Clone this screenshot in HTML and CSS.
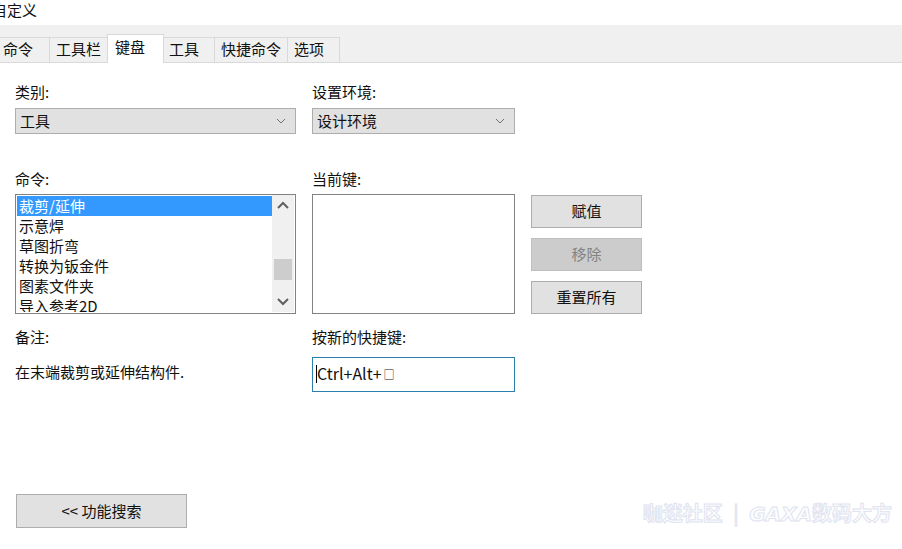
FILE: index.html
```html
<!DOCTYPE html>
<html>
<head>
    <meta charset="utf-8">
    <link rel="stylesheet" href="styles.css">
</head>
<body>
    <div id="dialog" class="flex-col">
        <div id="title">自定义</div>

        <div id="tabs" class="flex">
            <div class="tab">命令</div>
            <div class="tab">工具栏</div>
            <div class="tab active">键盘</div>
            <div class="tab">工具</div>
            <div class="tab">快捷命令</div>
            <div class="tab">选项</div>
        </div>

        <div id="page" class="flex-col flex-grow">
            <!-- category / environment -->
            <div class="row top-row">
                <div class="field col-left">
                    <div class="label">类别:</div>
                    <div class="combo flex">
                        <span class="flex-grow">工具</span>
                        <svg class="chev" width="10" height="6" viewBox="0 0 10 6"><polyline points="1,1 5,5 9,1" fill="none" stroke="#707070" stroke-width="1"/></svg>
                    </div>
                </div>
                <div class="field col-mid">
                    <div class="label">设置环境:</div>
                    <div class="combo flex">
                        <span class="flex-grow">设计环境</span>
                        <svg class="chev" width="10" height="6" viewBox="0 0 10 6"><polyline points="1,1 5,5 9,1" fill="none" stroke="#707070" stroke-width="1"/></svg>
                    </div>
                </div>
            </div>

            <!-- commands / current keys -->
            <div class="row cmd-row">
                <div class="field col-left">
                    <div class="label">命令:</div>
                    <div class="listbox flex">
                        <div class="items flex-grow">
                            <div class="item selected">裁剪/延伸</div>
                            <div class="item">示意焊</div>
                            <div class="item">草图折弯</div>
                            <div class="item">转换为钣金件</div>
                            <div class="item">图素文件夹</div>
                            <div class="item">导入参考2D</div>
                        </div>
                        <div class="scrollbar flex-col">
                            <svg class="arrow" width="22" height="20" viewBox="0 0 22 20"><polyline points="6,13 11,8 16,13" fill="none" stroke="#606060" stroke-width="2"/></svg>
                            <div class="track flex-grow">
                                <div class="thumb"></div>
                            </div>
                            <svg class="arrow" width="22" height="20" viewBox="0 0 22 20"><polyline points="6,7 11,12 16,7" fill="none" stroke="#606060" stroke-width="2"/></svg>
                        </div>
                    </div>
                </div>
                <div class="field col-mid">
                    <div class="label">当前键:</div>
                    <div class="keybox"></div>
                </div>
                <div class="buttons flex-col">
                    <div class="btn">赋值</div>
                    <div class="btn disabled">移除</div>
                    <div class="btn">重置所有</div>
                </div>
            </div>

            <!-- notes / new shortcut -->
            <div class="row note-row">
                <div class="field col-left">
                    <div class="label">备注:</div>
                    <div class="note">在末端裁剪或延伸结构件.</div>
                </div>
                <div class="field col-mid">
                    <div class="label">按新的快捷键:</div>
                    <div class="hotkey flex">
                        <span class="caret"></span><span class="keys">Ctrl+Alt+</span><span class="tofu">□</span>
                    </div>
                </div>
            </div>

            <div class="bottom">
                <div class="btn search-btn">&lt;&lt; 功能搜索</div>
            </div>
        </div>

        <div id="watermark">咖迷社区 <span class="bar">|</span> <i>GAXA</i>数码大方</div>
    </div>
</body>
</html>
```

FILE: styles.css
```css
/* Helpers */
.flex { display: flex; }
.flex-col { display: flex; flex-direction: column; }
.flex-grow { flex-grow: 1; }

/* General */
body, html {
    margin: 0;
    padding: 0;
    height: 100%;
    overflow: hidden;
    background: #fff;
}
body {
    font-family: "Noto Sans CJK SC", "Noto Sans", sans-serif;
    font-size: 15px;
    color: #111;
}
#dialog {
    position: relative;
    height: 549px;
}
#title {
    height: 25px;
    line-height: 19px;
    margin-left: -8px;
}

/* Tabs */
#tabs {
    height: 37px;
    background: #f0f0f0;
    border-bottom: 1px solid #d9d9d9;
    align-items: flex-end;
    margin-left: -3px;
}
.tab {
    box-sizing: border-box;
    height: 25px;
    min-width: 53px;
    padding: 0 6px;
    line-height: 21px;
    border: 1px solid #d9d9d9;
    border-bottom: none;
    margin-left: -1px;
    background: #f0f0f0;
}
.tab:first-child { padding-left: 6px; min-width: 54px; }
.tab.active {
    height: 29px;
    margin-bottom: -1px;
    background: #fff;
    padding-left: 7px;
    line-height: 23px;
    position: relative;
    min-width: 57px;
    margin-right: -1px;
}

/* Page */
#page {
    padding-left: 15px;
}
.row {
    display: flex;
    gap: 16px;
}
.col-left { width: 281px; }
.col-mid { width: 203px; }
.label {
    height: 20px;
    line-height: 17px;
}
.top-row { margin-top: 20px; }
.cmd-row { margin-top: 36px; }
.note-row { margin-top: 14px; }

.combo {
    box-sizing: border-box;
    margin-top: 5px;
    height: 26px;
    background: #e1e1e1;
    border: 1px solid #adadad;
    padding: 0 9px 0 4px;
    align-items: center;
    line-height: 22px;
}

.listbox {
    box-sizing: border-box;
    margin-top: 4px;
    height: 120px;
    border: 1px solid #828282;
    padding: 1px 1px 1px 1px;
    overflow: hidden;
}
.items { overflow: hidden; }
.item {
    height: 20px;
    line-height: 20px;
    padding-left: 2px;
    white-space: nowrap;
}
.item.selected {
    background: #3399ff;
    color: #fff;
}
.scrollbar {
    width: 22px;
    margin-top: -1px;
    background: #f0f0f0;
}
.arrow { display: block; flex-shrink: 0; }
.track { position: relative; }
.thumb {
    position: absolute;
    left: 2px; right: 2px;
    top: 44px;
    height: 21px;
    background: #cdcdcd;
}

.keybox {
    box-sizing: border-box;
    margin-top: 4px;
    height: 120px;
    border: 1px solid #828282;
}

.buttons {
    width: 111px;
    padding-top: 25px;
    gap: 10px;
}
.btn {
    box-sizing: border-box;
    height: 33px;
    line-height: 29px;
    text-align: center;
    background: #e1e1e1;
    border: 1px solid #adadad;
}
.btn.disabled {
    background: #cccccc;
    border-color: #bfbfbf;
    color: #838383;
}

.note {
    margin-top: 15px;
    height: 20px;
    line-height: 18px;
}
.hotkey {
    box-sizing: border-box;
    margin-top: 9px;
    height: 35px;
    border: 1px solid #2a7fae;
    padding: 0 3px;
    align-items: center;
}
.caret {
    width: 1px;
    height: 18px;
    background: #000;
    margin-top: -2px;
}
.keys {
    font-size: 16px;
    line-height: 20px;
    margin-top: -3px;
}
.tofu {
    font-size: 11px;
    line-height: 20px;
    margin-left: 2px;
    margin-top: -1px;
}

.bottom {
    margin-top: auto;
    margin-bottom: 21px;
}
.search-btn {
    width: 171px;
    margin-left: 1px;
    height: 34px;
    line-height: 31px;
}

/* Watermark overlay */
#watermark {
    position: absolute;
    right: 10px;
    bottom: 22px;
    font-size: 20px;
    font-weight: bold;
    color: #fdfdff;
    -webkit-text-stroke: 1px #e0e3f0;
    white-space: nowrap;
}
#watermark i {
    font-family: "DejaVu Sans", sans-serif;
    font-style: italic;
}
#watermark .bar { font-weight: normal; margin: 0 6px; }
```
